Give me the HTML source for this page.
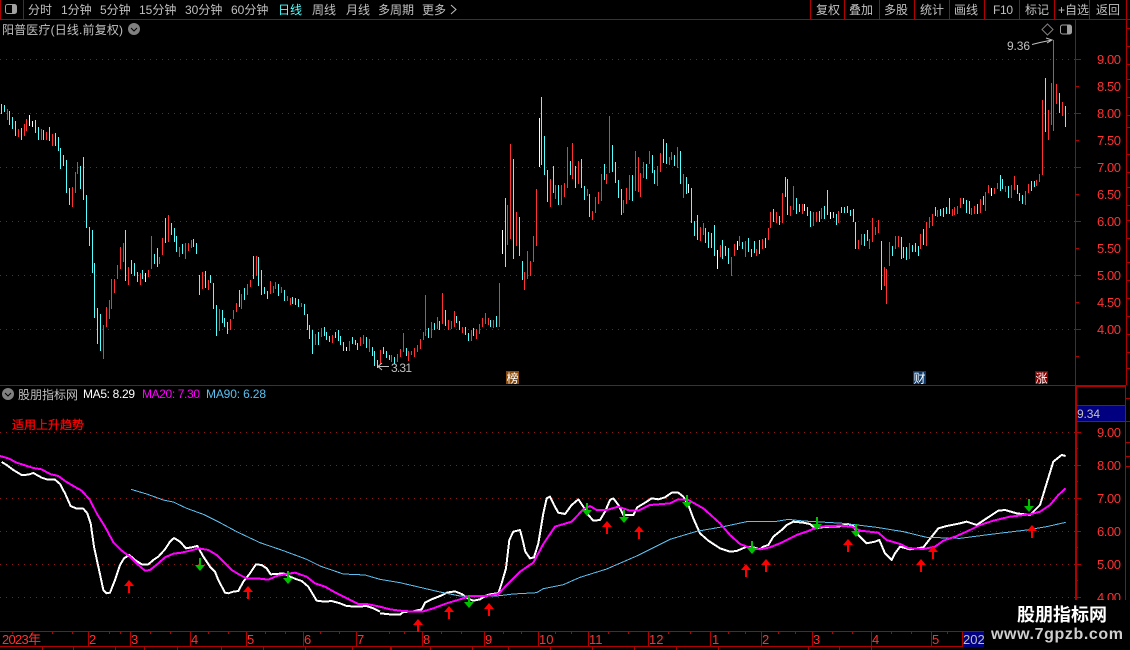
<!DOCTYPE html>
<html lang="zh"><head><meta charset="utf-8"><title>阳普医疗</title>
<style>
html,body{margin:0;padding:0;background:#000;width:1130px;height:650px;overflow:hidden}
svg{display:block}
text{font-family:"Liberation Sans","WenQuanYi Zen Hei","Noto Sans CJK SC",sans-serif;font-size:12px;fill:#c0c0c0}
.r text{fill:#ff3232;font-size:13px}
.t text{fill:#ff3232;font-size:13px}
</style></head><body>
<svg xmlns="http://www.w3.org/2000/svg" width="1130" height="650" viewBox="0 0 1130 650">
<defs>
<polygon id="u" points="0,0 5,6 1,6 1,13 -1,13 -1,6 -5,6" fill="#ff0000"/>
<polygon id="d" points="-1,0 1,0 1,7 5,7 0,13 -5,7 -1,7" fill="#00c000"/>
</defs>
<rect width="1130" height="650" fill="#000"/>

<!-- grid -->
<g stroke="#8b1a1a" stroke-dasharray="1 5" shape-rendering="crispEdges" fill="none">
<path d="M0 59.5H1075M0 113.5H1075M0 167.5H1075M0 221.5H1075M0 275.5H1075M0 329.5H1075"/>
<path d="M0 432.5H1075M0 465.5H1075M0 498.5H1075M0 531.5H1075M0 564.5H1075M0 597.5H1075"/>
</g>

<!-- frame -->
<g stroke="#b00000" fill="none" shape-rendering="crispEdges">
<path d="M0 19.5H1130M0.5 0V19M23.5 0V19M810.5 0V19M844.5 0V19M879.5 0V19M914.5 0V19M949.5 0V19M984.5 0V19M1019.5 0V19M1054.5 0V19M1089.5 0V19M1126.5 0V385"/>
<path d="M1075.5 19V600M0 385.5H1126M1125.5 385V600"/>
<path d="M1075 386.5H1126M1076.5 385V600" stroke-width="1"/>
<path d="M1076 405.5H1126M1076 421.5H1126"/>
<path d="M1075 59.5h6M1075 86.5h4M1075 113.5h6M1075 140.5h4M1075 167.5h6M1075 194.5h4M1075 221.5h6M1075 248.5h4M1075 275.5h6M1075 302.5h4M1075 329.5h6M1075 356.5h4"/>
<path d="M1075 432.5h6M1075 448.5h3M1075 465.5h6M1075 481.5h3M1075 498.5h6M1075 514.5h3M1075 531.5h6M1075 547.5h3M1075 564.5h6M1075 580.5h3M1075 597.5h6"/>
<path d="M1126 28.5h4M1126 46.5h4M1126 64.5h4M1126 79.5h4M1126 97.5h4M1126 115.5h4M1126 127.5h4M1126 154.5h4M1126 172.5h4M1126 187.5h4M1126 205.5h4M1126 220.5h4M1126 238.5h4M1126 262.5h4M1126 280.5h4M1126 298.5h4M1126 316.5h4M1126 334.5h4M1126 352.5h4M1126 368.5h4"/>
<path d="M1126 398.5h4M1126 421.5h4M1126 442.5h4M1126 456.5h4M1126 466.5h4"/>
<!-- time axis -->
<path d="M0 631.5H984M0 646.5H984"/>
<path d="M88.5 631V647M130.5 631V647M190.5 631V647M246.5 631V647M303.5 631V647M356.5 631V647M422.5 631V647M484.5 631V647M538.5 631V647M588.5 631V647M648.5 631V647M710.5 631V647M761.5 631V647M812.5 631V647M871.5 631V647M931.5 631V647M962.5 631V647"/>
<path d="M12.5 631v3M32.5 631v3M52.5 631v3M72.5 631v3M109.5 631v3M120.5 631v3M150.5 631v3M170.5 631v3M208.5 631v3M228.5 631v3M265.5 631v3M285.5 631v3M320.5 631v3M339.5 631v3M389.5 631v3M404.5 631v3M441.5 631v3M461.5 631v3M503.5 631v3M521.5 631v3M555.5 631v3M571.5 631v3M608.5 631v3M628.5 631v3M668.5 631v3M690.5 631v3M728.5 631v3M745.5 631v3M778.5 631v3M795.5 631v3M832.5 631v3M852.5 631v3M891.5 631v3M911.5 631v3M947.5 631v3"/>
<path d="M42.5 647v3M73.5 647v3M115.5 647v3M144.5 647v3M177.5 647v3M221.5 647v3M263.5 647v3M305.5 647v3M352.5 647v3M390.5 647v3M391.5 647v3M430.5 647v3M472.5 647v3M508.5 647v3M550.5 647v3M592.5 647v3M634.5 647v3M676.5 647v3M718.5 647v3M808.5 647v3M839.5 647v3M871.5 647v3"/>
</g>
<rect x="1077" y="406" width="48" height="15" fill="#000080"/>
<rect x="963" y="632" width="38" height="15" fill="#000080"/>

<!-- candles -->
<g fill="none" stroke-width="1" shape-rendering="crispEdges">
<path stroke="#54ffff" d="M1.5 104V114M4.5 105V112M9.5 111V125M12.5 117V129M15.5 121V136M21.5 128V140M35.5 120V133M38.5 127V140M43.5 130V140M49.5 127V141M55.5 133V146M58.5 137V151M60.5 148V169M63.5 155V166M66.5 160V193M69.5 188V205M80.5 166V189M83.5 157V200M86.5 195V228M89.5 227V246M92.5 230V273M94.5 263V318M97.5 308V344M100.5 314V351M125.5 230V281M131.5 260V274M134.5 263V276M137.5 272V282M142.5 270V279M154.5 254V264M157.5 248V267M165.5 218V243M171.5 223V235M174.5 228V242M176.5 236V252M182.5 244V254M193.5 239V247M196.5 243V254M199.5 275V295M205.5 271V288M210.5 275V283M213.5 283V309M216.5 305V336M222.5 310V323M224.5 318V327M227.5 322V334M239.5 290V307M244.5 288V300M253.5 256V279M258.5 257V286M261.5 270V295M264.5 287V294M267.5 291V299M278.5 284V296
M284.5 290V301M292.5 297V304M295.5 298V305M298.5 299V307M304.5 304V315M307.5 314V330M309.5 325V339M312.5 330V354M318.5 332V345M324.5 327V336M326.5 332V340M329.5 336V342M335.5 332V338M338.5 330V341M340.5 336V345M343.5 342V351M352.5 337V344M355.5 340V345M357.5 343V350M366.5 337V348M372.5 347V356M374.5 351V366M377.5 360V368M383.5 347V354M386.5 351V358M389.5 355V360M394.5 357V364M406.5 348V356M428.5 328V338M434.5 323V330M439.5 321V330M445.5 310V326M456.5 316V323M459.5 321V330M465.5 327V335M468.5 333V341M473.5 328V336M490.5 320V327M496.5 316V327M505.5 198V267M513.5 159V259M519.5 217V256M522.5 261V280M541.5 97V165M544.5 136V175M547.5 170V202M553.5 166V193M558.5 185V205
M570.5 161V175M575.5 166V188M581.5 159V188M584.5 186V200M589.5 194V217M604.5 164V180M612.5 145V172M615.5 162V183M618.5 180V198M621.5 189V215M632.5 175V201M646.5 164V179M652.5 155V173M654.5 170V184M663.5 139V163M666.5 143V164M674.5 155V166M680.5 151V184M686.5 177V194M691.5 188V223M694.5 221V236M697.5 215V240M705.5 228V243M708.5 232V248M711.5 233V248M714.5 225V256M722.5 240V259M725.5 246V256M728.5 248V264M742.5 242V249M748.5 238V252M751.5 249V257M754.5 241V253M759.5 240V254M765.5 238V248M773.5 209V222M779.5 216V225M785.5 177V197M787.5 179V215M796.5 198V214M799.5 204V212M807.5 207V216M810.5 211V227M819.5 211V222M824.5 206V219M827.5 190V215M833.5 212V218M836.5 214V225
M841.5 207V213M844.5 207V213M847.5 206V213M850.5 210V216M853.5 209V222M855.5 222V249M864.5 234V246M867.5 230V241M881.5 241V290M892.5 246V256M901.5 237V259M903.5 247V258M906.5 247V260M912.5 245V252M915.5 243V252M918.5 246V256M923.5 229V245M935.5 207V216M940.5 209V216M943.5 208V217M946.5 207V214M949.5 198V214M963.5 198V204M966.5 200V213M969.5 201V214M977.5 204V214M983.5 196V205M1000.5 175V191M1002.5 179V189M1008.5 186V198M1017.5 185V194M1019.5 193V201M1022.5 195V204M1031.5 181V191M1034.5 181V187M1045.5 78V132M1059.5 93V113M1065.5 106V127"/>
<path stroke="#ff3232" d="M7.5 109V120M18.5 129V137M24.5 124V136M26.5 119V131M41.5 129V140M46.5 132V140M52.5 134V146M72.5 187V207M75.5 172V193M77.5 162V174M103.5 325V359M106.5 307V327M109.5 300V319M111.5 279V309M114.5 279V293M117.5 265V279M120.5 247V269M123.5 243V262M128.5 267V285M140.5 273V285M148.5 270V277M151.5 236V269M159.5 257V264M162.5 238V255M168.5 215V242M179.5 247V257M185.5 243V259M188.5 243V251M191.5 240V248M202.5 272V289M208.5 280V290M219.5 309V331M230.5 319V330M233.5 310V319M236.5 303V312M241.5 294V309M247.5 284V295M250.5 280V287M256.5 256V276M270.5 281V294M273.5 286V293M275.5 282V289
M281.5 287V293M287.5 296V301M290.5 298V305M301.5 303V307M315.5 334V345M321.5 328V337M332.5 335V343M349.5 341V351M360.5 337V346M363.5 335V344M369.5 339V352M380.5 350V364M391.5 355V362M397.5 354V362M400.5 349V357M403.5 333V352M408.5 351V361M411.5 351V355M414.5 348V357M417.5 345V352M420.5 339V349M423.5 332V340M425.5 295V336M431.5 322V338M437.5 317V329M442.5 293V324M448.5 320V330M451.5 321V329M454.5 311V327M462.5 327V333M471.5 330V341M476.5 329V339M479.5 324V334M482.5 318V327M485.5 313V324M488.5 318V325M493.5 320V328M499.5 283V327M507.5 205V245M510.5 144V239M516.5 212V246M524.5 272V290M527.5 251V279M530.5 261V276M533.5 236V262M536.5 189V246M550.5 179V207M555.5 185V199
M561.5 185V205M564.5 183V197M567.5 147V188M572.5 143V179M578.5 161V184M587.5 189V196M592.5 211V220M595.5 197V213M598.5 192V204M601.5 174V201M606.5 174V184M609.5 116V173M623.5 200V213M626.5 188V204M629.5 175V200M635.5 151V191M638.5 157V192M640.5 173V197M643.5 162V178M649.5 151V164M657.5 166V186M660.5 153V172M669.5 157V165M671.5 152V160M677.5 147V168M683.5 174V198M700.5 227V241M703.5 223V235M720.5 245V257M731.5 257V276M734.5 244V256M739.5 236V246M745.5 241V257M756.5 249V256M762.5 239V249M768.5 228V240M770.5 212V228M776.5 212V223M782.5 193V223M790.5 206V216M793.5 186V210M802.5 204V214M813.5 212V226M816.5 212V222M821.5 208V219M838.5 211V223
M858.5 240V249M861.5 234V245M869.5 239V249M872.5 218V242M875.5 227V235M878.5 220V233M884.5 267V286M886.5 269V304M889.5 242V266M895.5 236V249M898.5 236V247M909.5 243V259M920.5 234V249M926.5 222V246M929.5 217V228M932.5 214V226M937.5 210V217M952.5 209V216M954.5 207V215M957.5 206V214M960.5 198V208M971.5 208V215M974.5 206V214M980.5 199V213M985.5 192V211M988.5 185V193M994.5 188V194M997.5 183V189M1005.5 186V192M1011.5 185V198M1014.5 176V190M1025.5 191V205M1028.5 184V193M1036.5 180V186M1039.5 174V182M1042.5 100V175M1048.5 110V140M1051.5 83V125M1053.5 40V131M1056.5 84V104M1062.5 102V116"/>
<path stroke="#ffffff" d="M29.5 115V126M32.5 121V127M145.5 273V282M346.5 347V351M502.5 230V254M539.5 118V167M688.5 184V193M717.5 250V269M737.5 241V250M804.5 204V211M830.5 212V219M991.5 188V196"/>
</g>

<!-- annotations -->
<text x="1007" y="50" textLength="23">9.36</text>
<path d="M1032 44.5L1040 42.5L1052 40M1046 38L1052 40L1047 43" stroke="#c0c0c0" fill="none"/>
<path d="M389 366.5H378M382 363L378 366.5L382 370" stroke="#c0c0c0" fill="none"/>
<text x="391" y="372" textLength="21">3.31</text>
<rect x="506" y="371" width="13" height="13" fill="#8a4a0a"/><text x="506.5" y="382.5" style="fill:#fff">榜</text>
<rect x="913" y="371" width="13" height="13" fill="#0d3a6b"/><text x="913.5" y="382.5" style="fill:#fff">财</text>
<rect x="1035" y="371" width="13" height="13" fill="#800000"/><text x="1035.5" y="382.5" style="fill:#fff">涨</text>

<!-- curves -->
<g fill="none" stroke-linejoin="round" shape-rendering="crispEdges">
<g transform="translate(0,380) scale(.33333)">
<polyline stroke="#fff" stroke-width="6" points="5,246 20,255 40,270 65,285 85,284 100,279 125,293 140,298 165,299 180,312 195,340 212,378 230,386 250,386 262,400 272,430 282,500 295,560 310,630 320,640 330,638 345,600 360,555 372,535 388,525 405,540 425,553 445,553 460,540 475,530 495,508 510,485 522,474 540,485 558,505 575,502 592,498 610,530 630,560 645,575 655,600 675,638 685,640 700,635 715,633 730,605 750,580 768,553 785,555 800,565 812,583 830,582 850,580 870,590 890,598 905,603 925,620 950,662 975,665 995,663 1020,670 1040,678 1070,680 1100,678 1120,685 1140,695"/>
<polyline stroke="#5bc0f0" stroke-width="3" points="393,328 440,342 490,360 520,366 560,385 610,403 660,428 710,455 780,488 850,512 920,538 960,558 1030,582 1095,585 1140,598"/>
<polyline stroke="#ff00ff" stroke-width="6" points="0,228 25,235 50,248 75,256 100,264 125,268 150,282 175,288 195,303 220,318 245,332 270,360 290,400 315,440 340,487 365,512 390,530 415,555 435,572 450,570 475,550 495,532 520,521 545,518 570,512 595,505 625,510 650,525 670,545 695,570 720,585 740,595 770,595 805,599 830,588 860,582 885,578 920,590 945,610 975,620 1010,640 1040,655 1075,672 1100,672 1140,680"/>
</g>
<g transform="translate(380,470) scale(.33333)">
<polyline stroke="#fff" stroke-width="6" points="0,430 30,433 60,434 70,426 100,424 125,418 135,398 155,388 185,376 200,368 225,364 245,372 265,386 280,392 300,388 320,376 335,372 355,370 365,340 378,295 388,210 400,185 420,180 428,210 436,245 450,265 462,262 475,220 490,130 500,85 510,80 522,105 535,128 555,132 575,105 595,88 610,110 625,135 640,152 660,150 675,125 690,90 700,85 715,105 730,135 760,135 772,112 800,95 815,85 835,88 855,82 875,68 895,68 910,80 925,105 940,145 960,190 985,212 1020,235 1050,245 1070,243 1100,230 1120,232 1140,238"/>
<polyline stroke="#5bc0f0" stroke-width="3" points="0,328 60,338 120,352 180,366 240,378 300,378 350,378 400,372 470,368 490,356 550,344 600,322 680,297 770,258 870,208 950,184 1030,170 1100,155 1140,155"/>
<polyline stroke="#ff00ff" stroke-width="6" points="0,410 30,418 60,422 100,425 130,424 160,415 200,400 240,388 270,378 320,378 355,372 385,340 420,305 460,278 490,222 525,170 575,155 610,118 630,108 650,120 680,120 715,110 750,122 775,122 810,105 870,100 895,88 925,90 970,115 1020,160 1050,195 1080,222 1115,235 1140,238"/>
</g>
<g transform="translate(760,390) scale(.33333)">
<polyline stroke="#fff" stroke-width="6" points="0,478 10,470 25,465 40,440 65,420 80,405 100,395 130,398 150,402 165,415 185,412 210,410 235,410 265,402 280,408 295,435 320,460 345,455 358,450 375,490 395,510 405,490 420,470 450,478 490,472 515,440 535,415 560,408 600,400 620,395 650,405 680,385 715,362 735,360 770,370 810,375 840,345 860,280 880,215 905,195 917,198"/>
<polyline stroke="#5bc0f0" stroke-width="3" points="0,394 50,394 85,388 130,393 250,400 350,412 430,425 500,442 600,445 700,432 800,420 860,410 917,397"/>
<polyline stroke="#ff00ff" stroke-width="6" points="0,478 30,472 60,460 85,448 110,435 140,425 170,412 200,408 240,407 275,410 300,422 355,428 380,450 420,462 445,474 490,477 525,470 550,452 590,438 630,420 660,405 700,392 750,380 810,373 840,365 870,345 895,315 917,295"/>
</g>
</g>

<!-- arrows -->
<use href="#u" x="129" y="580"/><use href="#u" x="248" y="586"/><use href="#u" x="418" y="619"/><use href="#u" x="449" y="606"/><use href="#u" x="489" y="603"/><use href="#u" x="607" y="521"/><use href="#u" x="639" y="526"/><use href="#u" x="746" y="564"/><use href="#u" x="766" y="559"/><use href="#u" x="848" y="539"/><use href="#u" x="921" y="559"/><use href="#u" x="933" y="546"/><use href="#u" x="1032" y="525"/>
<use href="#d" x="200" y="558"/><use href="#d" x="288" y="571"/><use href="#d" x="469" y="595"/><use href="#d" x="587" y="503"/><use href="#d" x="624" y="510"/><use href="#d" x="687" y="495"/><use href="#d" x="752" y="541"/><use href="#d" x="817" y="517"/><use href="#d" x="856" y="524"/><use href="#d" x="1029" y="499"/>

<!-- toolbar -->
<rect x="5.5" y="4.5" width="11" height="9" rx="2" fill="none" stroke="#a0a0a0"/><rect x="12" y="5" width="4" height="8" fill="#a0a0a0"/>
<g>
<text x="28" y="14">分时</text><text x="61" y="14">1分钟</text><text x="100" y="14">5分钟</text><text x="139" y="14">15分钟</text><text x="185" y="14">30分钟</text><text x="231" y="14">60分钟</text>
<text x="278" y="14" style="fill:#54ffff">日线</text><text x="312" y="14">周线</text><text x="346" y="14">月线</text><text x="378" y="14">多周期</text><text x="422" y="14">更多</text>
<path d="M451 5L456 9.5L451 14" stroke="#c0c0c0" fill="none"/>
<text x="816" y="14">复权</text><text x="849" y="14">叠加</text><text x="884" y="14">多股</text><text x="920" y="14">统计</text><text x="954" y="14">画线</text><text x="993" y="14" textLength="20">F10</text><text x="1025" y="14">标记</text><text x="1058" y="14">+自选</text><text x="1096" y="14">返回</text>
</g>

<!-- title -->
<text x="2" y="34" textLength="121">阳普医疗(日线.前复权)</text>
<circle cx="134" cy="29" r="6" fill="#808080"/><path d="M131 28L134 31L137 28" stroke="#000" fill="none"/>
<path d="M1047.5 24L1053 29.5L1047.5 35L1042 29.5Z" fill="none" stroke="#808080"/>
<rect x="1060.5" y="25" width="11" height="9" rx="2" fill="none" stroke="#a0a0a0"/><rect x="1067" y="25.5" width="4" height="8" fill="#a0a0a0"/>

<!-- price labels -->
<g class="r">
<text x="1097" y="64" textLength="24">9.00</text><text x="1097" y="91" textLength="24">8.50</text><text x="1097" y="118" textLength="24">8.00</text><text x="1097" y="145" textLength="24">7.50</text><text x="1097" y="172" textLength="24">7.00</text><text x="1097" y="199" textLength="24">6.50</text><text x="1097" y="226" textLength="24">6.00</text><text x="1097" y="253" textLength="24">5.50</text><text x="1097" y="280" textLength="24">5.00</text><text x="1097" y="307" textLength="24">4.50</text><text x="1097" y="334" textLength="24">4.00</text>
<text x="1097" y="437" textLength="24">9.00</text><text x="1097" y="470" textLength="24">8.00</text><text x="1097" y="503" textLength="24">7.00</text><text x="1097" y="536" textLength="24">6.00</text><text x="1097" y="569" textLength="24">5.00</text><text x="1097" y="602" textLength="24">4.00</text>
</g>
<text x="1077" y="418" textLength="23">9.34</text>

<!-- indicator legend -->
<circle cx="8" cy="394" r="6" fill="#808080"/><path d="M5 393L8 396L11 393" stroke="#000" fill="none"/>
<text x="18" y="399">股朋指标网</text>
<text x="83" y="398" textLength="52" style="fill:#fff">MA5: 8.29</text>
<text x="142" y="398" textLength="58" style="fill:#ff00ff">MA20: 7.30</text>
<text x="206" y="398" textLength="60" style="fill:#5bc0f0">MA90: 6.28</text>
<text x="12" y="429" style="fill:#ff0000;stroke:#ff0000;stroke-width:.3px">适用上升趋势</text>

<!-- time labels -->
<g class="t">
<text x="2" y="644" textLength="39">2023年</text><text x="89" y="644">2</text><text x="131" y="644">3</text><text x="191" y="644">4</text><text x="247" y="644">5</text><text x="304" y="644">6</text><text x="357" y="644">7</text><text x="423" y="644">8</text><text x="485" y="644">9</text><text x="539" y="644">10</text><text x="589" y="644">11</text><text x="649" y="644">12</text><text x="712" y="644">1</text><text x="762" y="644">2</text><text x="813" y="644">3</text><text x="872" y="644">4</text><text x="932" y="644">5</text>
</g>
<text x="963" y="644" style="font-size:13px">202</text>

<!-- watermark -->
<rect x="984" y="600" width="146" height="50" fill="#000"/>
<text x="1017" y="621" style="font-size:18px;font-weight:bold;fill:#fff">股朋指标网</text>
<text x="991" y="639" textLength="132" style="font-size:16px;font-weight:bold;fill:#cfcfcf">www.7gpzb.com</text>
</svg>
</body></html>
